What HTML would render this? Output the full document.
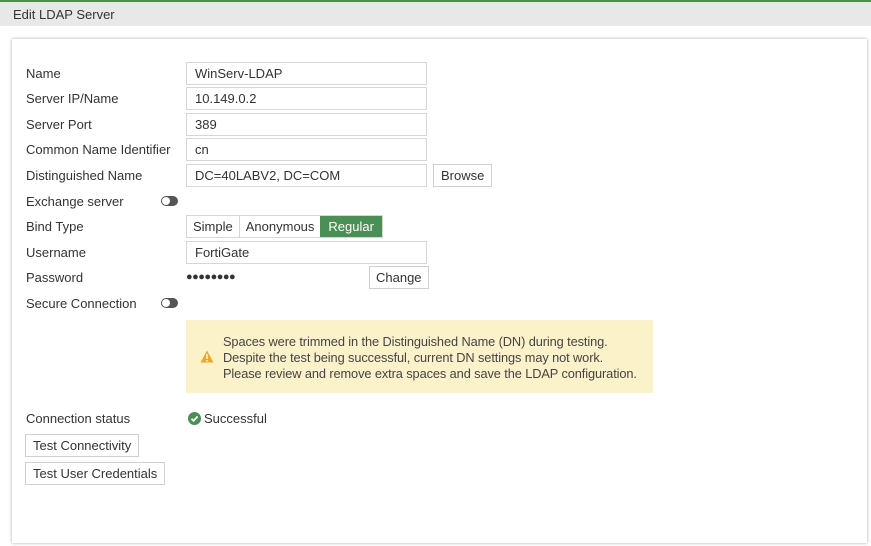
<!DOCTYPE html>
<html><head><style>
body{margin:0;width:871px;height:546px;background:#f0f0f0;font-family:"Liberation Sans",sans-serif;font-size:13px;color:#333;position:relative;overflow:hidden}
.top{position:absolute;left:0;top:0;width:871px;height:2px;background:#4a9150}
.hdr{position:absolute;left:0;top:2px;width:871px;height:24px;background:#e8e8e8;}
.hdr span{position:absolute;left:13px;top:5px;font-size:13px;color:#333}
.wh{position:absolute;left:0;top:26px;width:871px;height:520px;background:#fff}
.panel{position:absolute;left:12px;top:39px;width:855px;height:504px;background:#fff;box-shadow:0 0 3px rgba(0,0,0,.35)}
.a{position:absolute;white-space:nowrap}
.in{position:absolute;left:186px;width:239px;height:21px;border:1px solid #d6d6d6;background:#fff}
.in span{position:absolute;left:8px;top:3px}
.btn{position:absolute;border:1px solid #d0d0d0;background:#fff;height:21px;line-height:21px;padding:0 7px;box-sizing:content-box}
.tog{position:absolute;left:161px;width:17px;height:10px;border-radius:6px;background:#555}
.tog:after{content:"";position:absolute;left:1px;top:1px;width:8px;height:8px;border-radius:50%;background:#fff}
</style></head><body>
<div class="top"></div>
<div class="hdr"><span>Edit LDAP Server</span></div>
<div class="wh"></div>
<div class="panel"></div>
<div class="a" style="left:26px;top:66px">Name</div>
<div class="a" style="left:26px;top:91px">Server IP/Name</div>
<div class="a" style="left:26px;top:117px">Server Port</div>
<div class="a" style="left:26px;top:142px">Common Name Identifier</div>
<div class="a" style="left:26px;top:168px">Distinguished Name</div>
<div class="a" style="left:26px;top:194px">Exchange server</div>
<div class="a" style="left:26px;top:219px">Bind Type</div>
<div class="a" style="left:26px;top:245px">Username</div>
<div class="a" style="left:26px;top:270px">Password</div>
<div class="a" style="left:26px;top:296px">Secure Connection</div>
<div class="in" style="top:62px"><span>WinServ-LDAP</span></div>
<div class="in" style="top:87px"><span>10.149.0.2</span></div>
<div class="in" style="top:113px"><span>389</span></div>
<div class="in" style="top:138px"><span>cn</span></div>
<div class="in" style="top:164px"><span>DC=40LABV2, DC=COM</span></div>
<div class="btn" style="left:433px;top:164px">Browse</div>
<div class="tog" style="top:196px"></div>
<div class="a" style="left:186px;top:215px;height:21px;border:1px solid #d6d6d6;display:flex;line-height:21px">
<span style="padding:0 6px;border-right:1px solid #d6d6d6">Simple</span><span style="padding:0 6px">Anonymous</span><span style="padding:0 8px;background:#4a8f55;color:#fff">Regular</span></div>
<div class="in" style="top:241px"><span>FortiGate</span></div>
<div class="a" style="left:186px;top:271px;font-size:11px;letter-spacing:-0.5px">●●●●●●●●</div>
<div class="btn" style="left:369px;top:266px;padding:0 6px">Change</div>
<div class="tog" style="top:298px"></div>
<div class="a" style="left:186px;top:320px;width:467px;height:73px;background:#fcf2c9"></div>
<svg class="a" style="left:200px;top:350px" width="14" height="13" viewBox="0 0 14 13"><path d="M7 0.5L13.5 12.5H0.5Z" fill="#e8a92c"/><rect x="6.3" y="4" width="1.4" height="5" fill="#fff"/><rect x="6.3" y="10" width="1.4" height="1.4" fill="#fff"/></svg>
<div class="a" style="left:223px;top:334px;line-height:16px;color:#444;font-size:12.8px;letter-spacing:-0.1px">Spaces were trimmed in the Distinguished Name (DN) during testing.<br>Despite the test being successful, current DN settings may not work.<br>Please review and remove extra spaces and save the LDAP configuration.</div>
<div class="a" style="left:26px;top:411px">Connection status</div>
<svg class="a" style="left:188px;top:412px" width="13" height="13" viewBox="0 0 13 13"><circle cx="6.5" cy="6.5" r="6.5" fill="#4a8f55"/><path d="M3.5 6.8L5.6 8.8L9.6 4.5" stroke="#fff" stroke-width="1.8" fill="none"/></svg>
<div class="a" style="left:204px;top:411px">Successful</div>
<div class="btn" style="left:25px;top:434px">Test Connectivity</div>
<div class="btn" style="left:25px;top:462px">Test User Credentials</div>
</body></html>
